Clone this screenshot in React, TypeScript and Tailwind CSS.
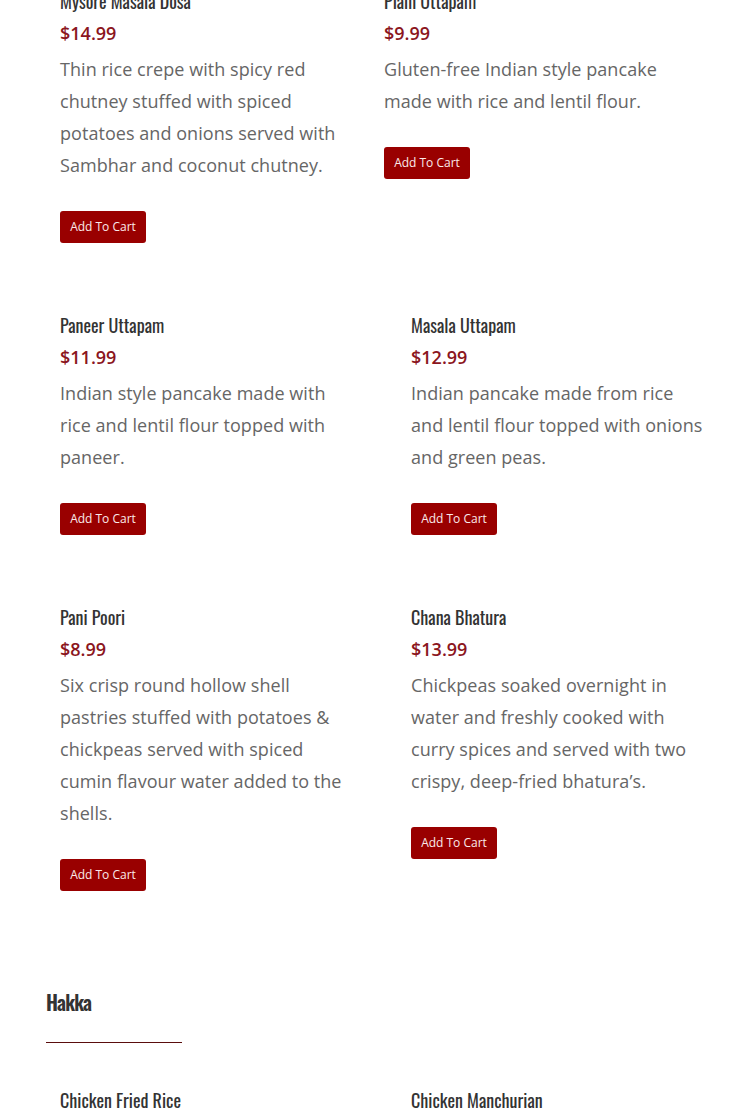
import React from 'react';

type Item = { name: string; price: string; desc: string };

const titleFont = "font-['Oswald','Liberation_Sans_Narrow','DejaVu_Sans_Condensed',sans-serif]";

function MenuItem({ item, descWidth }: { item: Item; descWidth: string }) {
  return (
    <div className="pl-[14px]">
      <h3 className={`${titleFont} text-[18px] leading-[32px] text-[#333]`}>{item.name}</h3>
      <p className="font-['Open_Sans',sans-serif] text-[18px] leading-[32px] font-semibold text-[#8b1520]">{item.price}</p>
      <p className={`mt-1 font-['Open_Sans',sans-serif] text-[18px] leading-[32px] text-[#666] tracking-[0.05px] ${descWidth}`}>{item.desc}</p>
      <button className="mt-[30px] h-8 w-[86px] rounded-[3px] bg-[#990000] font-['Open_Sans',sans-serif] text-[12px] text-[#fbeaea]">
        Add To Cart
      </button>
    </div>
  );
}

const rows: Item[][] = [
  [
    { name: 'Paneer Uttapam', price: '$11.99', desc: 'Indian style pancake made with rice and lentil flour topped with paneer.' },
    { name: 'Masala Uttapam', price: '$12.99', desc: 'Indian pancake made from rice and lentil flour topped with onions and green peas.' },
  ],
  [
    { name: 'Pani Poori', price: '$8.99', desc: 'Six crisp round hollow shell pastries stuffed with potatoes & chickpeas served with spiced cumin flavour water added to the shells.' },
    { name: 'Chana Bhatura', price: '$13.99', desc: 'Chickpeas soaked overnight in water and freshly cooked with curry spices and served with two crispy, deep-fried bhatura’s.' },
  ],
];

export default function App() {
  return (
    <div className="h-[1116px] w-[730px] overflow-hidden bg-white pl-[46px]">
      <div className="-mt-[15px] grid grid-cols-[324px_1fr] items-start">
        <MenuItem
          item={{ name: 'Mysore Masala Dosa', price: '$14.99', desc: 'Thin rice crepe with spicy red chutney stuffed with spiced potatoes and onions served with Sambhar and coconut chutney.' }}
          descWidth="max-w-[295px]"
        />
        <MenuItem
          item={{ name: 'Plain Uttapam', price: '$9.99', desc: 'Gluten-free Indian style pancake made with rice and lentil flour.' }}
          descWidth="max-w-[310px]"
        />
      </div>

      {rows.map((row, i) => (
        <div key={i} className="mt-[66px] grid grid-cols-[351px_1fr] items-start">
          <MenuItem item={row[0]} descWidth="max-w-[295px]" />
          <MenuItem item={row[1]} descWidth="max-w-[296px]" />
        </div>
      ))}

      <div className="mt-[95px]">
        <h2 className={`${titleFont} text-[20px] leading-[32px] font-semibold text-[#333] tracking-[-0.9px]`}>Hakka</h2>
        <div className="mt-[24px] h-px w-[136px] bg-[#5a0d0d]" />
      </div>

      <div className="mt-[41px] grid grid-cols-[351px_1fr] items-start">
        <div className="pl-[14px]">
          <h3 className={`${titleFont} text-[18px] leading-[32px] text-[#333]`}>Chicken Fried Rice</h3>
        </div>
        <div className="pl-[14px]">
          <h3 className={`${titleFont} text-[18px] leading-[32px] text-[#333]`}>Chicken Manchurian</h3>
        </div>
      </div>
    </div>
  );
}
